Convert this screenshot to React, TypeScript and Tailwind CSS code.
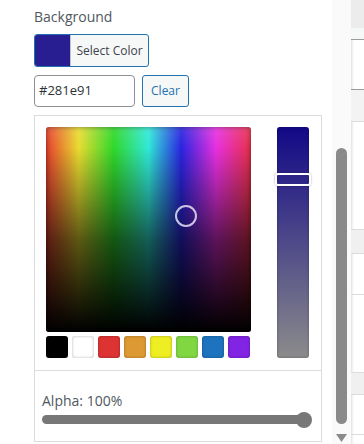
const swatches = ["#000000", "#ffffff", "#dd3333", "#dd9933", "#eeee22", "#81d742", "#1e73be", "#8224e3"];

function SideStrip() {
  return (
    <div className="relative flex w-[13px] flex-col bg-white shadow-[inset_3px_0_3px_-2px_rgba(0,0,0,0.15)]">
      <div className="h-[28px] bg-[#ececec]" />
      <div className="h-[12px] border-b border-[#9a9a9a] bg-[#f6f7f7]" />
      <div className="h-[50px] border-b border-[#9a9a9a]" />
      <div className="h-[32px] border-b border-[#dcdcde] bg-[#f3f3f3]" />
      <div className="h-[108px] border-b border-[#dcdcde]" />
      <div className="h-[24px] border-b border-[#dcdcde] bg-[#f0f0f0]" />
      <div className="h-[41px] border-b border-[#dcdcde]" />
      <div className="h-[77px]" />
      <div className="h-[23px] border-y border-[#dcdcde] bg-[#f0f0f0]" />
      <div className="h-[40px] border-b border-[#dcdcde]" />
    </div>
  );
}

function Scrollbar() {
  return (
    <div className="relative w-[19px] bg-[#fafafa]">
      <div className="absolute left-[4px] top-[148px] h-[276px] w-[11px] rounded-full bg-[#8a8a8a]" />
      <svg className="absolute left-[3px] top-[433px]" width="13" height="10" viewBox="0 0 13 10">
        <path d="M1 1 L12 1 L6.5 9 Z" fill="#8a8a8a" />
      </svg>
    </div>
  );
}

export default function App() {
  return (
    <div className="flex h-[444px] w-[364px] overflow-hidden bg-white font-['Open_Sans',sans-serif]">
      <div className="w-[332px] pl-[34px] pt-[7px]">
        <div className="text-[14px] leading-[20px] text-[#50575e]">Background</div>

        <div className="mt-[7px] flex h-[33px] w-[115px] overflow-hidden rounded-[3px] border border-[#2271b1] bg-[#f6f7f7]">
          <div className="w-[35px] bg-[#281e91]" />
          <div className="flex flex-1 items-center justify-center border-l border-[#c3c4c7] text-[12px] text-[#3c434a]">
            Select Color
          </div>
        </div>

        <div className="mt-[8px] flex gap-[7px]">
          <div className="flex h-[32px] w-[101px] items-center rounded-[4px] border border-[#8c8f94] px-[4px] text-[13px] text-[#2c3338]">
            #281e91
          </div>
          <div className="flex h-[32px] w-[47px] items-center justify-center rounded-[3px] border border-[#2271b1] bg-[#f6f7f7] text-[12px] text-[#2271b1]">
            Clear
          </div>
        </div>

        <div className="mt-[8px] w-[288px] border border-[#dcdcde]">
          <div className="flex p-[11px] pb-[12px] pr-[12px]">
            <div className="flex flex-col">
              <div className="relative h-[205px] w-[205px] overflow-hidden rounded-[3px] bg-[linear-gradient(to_right,#e8402e,#e8dc30_16%,#30d82a_33%,#30e8d8_50%,#2a24e0_66%,#e830e0_83%,#e8304a)] shadow-[inset_0_0_5px_rgba(0,0,0,0.5)]">
                <div className="absolute inset-0 bg-[linear-gradient(to_bottom,rgba(255,255,255,0.1),rgba(0,0,0,0)_10%,rgba(0,0,0,0.6)_55%,#000_100%)]" />
                <div className="absolute left-[129px] top-[78px] h-[22px] w-[22px] rounded-full border-[2px] border-[rgba(230,225,245,0.85)]" />
              </div>
              <div className="mt-[4px] flex gap-[4px]">
                {swatches.map((c) => (
                  <div
                    key={c}
                    className="h-[22px] w-[22px] rounded-[3px] shadow-[inset_0_0_3px_rgba(0,0,0,0.3)]"
                    style={{ backgroundColor: c }}
                  />
                ))}
              </div>
            </div>
            <div className="relative ml-[26px] h-[231px] w-[32px] rounded-[3px] bg-[linear-gradient(to_bottom,#120887,#8b8b8b)] shadow-[inset_0_0_3px_rgba(0,0,0,0.3)]">
              <div className="absolute left-[-2px] top-[46px] h-[13px] w-[36px] rounded-[3px] border-[2px] border-white shadow-[0_0_2px_rgba(0,0,0,0.4)]" />
            </div>
          </div>

          <div className="border-t border-[#dcdcde] px-[7px] pb-[13px] pt-[20px]">
            <div className="text-[14px] leading-[20px] text-[#50575e]">Alpha: 100%</div>
            <div className="relative mt-[1px] h-[16px]">
              <div className="absolute left-0 right-[8px] top-[3px] h-[9px] rounded-full bg-[#777777]" />
              <div className="absolute right-[2px] top-0 h-[16px] w-[16px] rounded-full bg-[#777777]" />
            </div>
          </div>
        </div>
      </div>
      <Scrollbar />
      <SideStrip />
    </div>
  );
}
